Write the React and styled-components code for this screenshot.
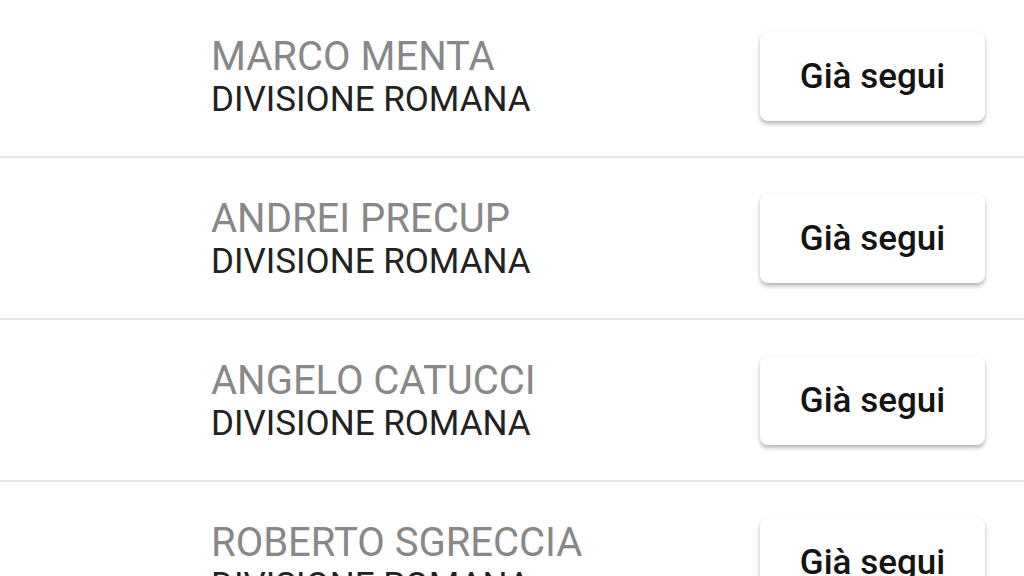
import React from 'react'
import styled, { createGlobalStyle } from "styled-components";

const GlobalStyle = createGlobalStyle`
  html, body {
    margin: 0;
    padding: 0;
    background: #ffffff;
    overflow: hidden;
  }
  body {
    font-family: Roboto, "Noto Sans", Arial, sans-serif;
  }
`

const List = styled.div`
    display: flex;
    flex-direction: column;
    margin-top: -4px;
`

const Row = styled.div`
    height: 160px;
    display: flex;
    align-items: center;
    justify-content: space-between;
    padding: 0 39px 0 211px;
    border-bottom: 2px solid #e8e8e8;
    flex-shrink: 0;
`

const Info = styled.div`
    display: flex;
    flex-direction: column;
    padding-top: 4px;
    white-space: nowrap;
`

const Name = styled.div`
    font-size: 40px;
    line-height: 44px;
    color: #888888;
`

const Division = styled.div`
    font-size: 35px;
    line-height: 42px;
    color: #222222;
`

const FollowButton = styled.button`
    width: 225px;
    height: 89px;
    border: none;
    border-radius: 8px;
    background: #ffffff;
    box-shadow: 0 3px 4px rgba(0, 0, 0, 0.28), 0 0 2px rgba(0, 0, 0, 0.06);
    font-family: Roboto, "Noto Sans", Arial, sans-serif;
    font-size: 35px;
    font-weight: 500;
    color: #141414;
    cursor: pointer;
    flex-shrink: 0;
`

const people = [
  "MARCO MENTA",
  "ANDREI PRECUP",
  "ANGELO CATUCCI",
  "ROBERTO SGRECCIA",
];

const App = () => {
  return (
    <>
      <GlobalStyle />
      <List>
        {people.map((name) => (
          <Row key={name}>
            <Info>
              <Name>{name}</Name>
              <Division>DIVISIONE ROMANA</Division>
            </Info>
            <FollowButton>Già segui</FollowButton>
          </Row>
        ))}
      </List>
    </>
  );
}

export default App
